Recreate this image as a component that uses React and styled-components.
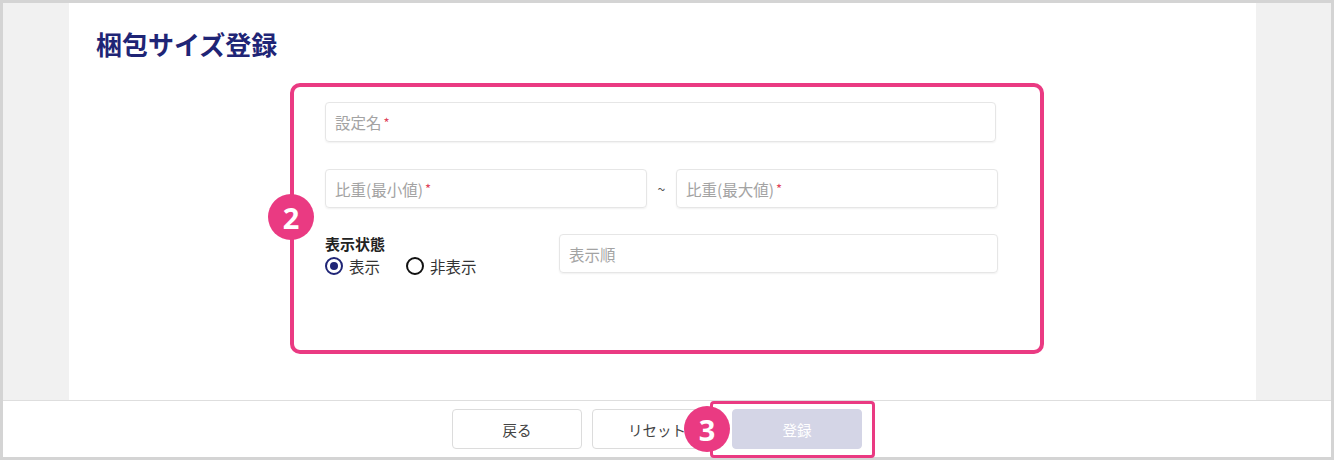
import React from 'react';
import styled, { createGlobalStyle } from 'styled-components';

const GlobalStyle = createGlobalStyle`
  html, body {
    margin: 0;
    padding: 0;
    background: #ffffff;
  }
  body {
    font-family: "Noto Sans CJK JP", "Noto Sans", sans-serif;
  }
`;

const COLORS = {
  navy: '#1f2576',
  pink: '#ea3a82',
  frame: '#d4d4d4',
  side: '#f1f1f1',
  line: '#dedede',
  placeholder: '#a3a3a3',
  required: '#e0445a',
};

const Frame = styled.div`
  position: relative;
  width: 1334px;
  height: 460px;
  box-sizing: border-box;
  border: 3px solid ${COLORS.frame};
  display: flex;
  flex-flow: column nowrap;
  background: white;
`;

const Main = styled.div`
  display: grid;
  grid-template-columns: 66px 1fr 75px;
  height: 397px;
`;

const Side = styled.div`
  background-color: ${COLORS.side};
`;

const Content = styled.div`
  background: white;
  padding: 23px 0 0 27px;
`;

const Title = styled.h1`
  margin: 0;
  font-size: 26px;
  line-height: 36px;
  font-weight: 700;
  color: ${COLORS.navy};
`;

const Form = styled.div`
  margin: 40px 0 0 229px;
  width: 673px;
  display: flex;
  flex-flow: column nowrap;
`;

const Row = styled.div`
  display: flex;
  flex-flow: row nowrap;
  align-items: ${(p) => p.align || 'center'};
  margin-top: ${(p) => p.top || 0}px;
`;

const Field = styled.div`
  box-sizing: border-box;
  width: ${(p) => p.width}px;
  height: ${(p) => p.height || 39}px;
  border: 1px solid #e6e6e6;
  border-radius: 4px;
  box-shadow: 0 1px 2px rgba(0, 0, 0, 0.06);
  padding: 0 9px;
  display: flex;
  align-items: center;
  font-size: 15.5px;
  color: ${COLORS.placeholder};
`;

const Req = styled.span`
  color: ${COLORS.required};
  font-size: 13px;
  margin-left: 2px;
`;

const Tilde = styled.span`
  width: 29px;
  text-align: center;
  color: #555;
  font-size: 14px;
`;

const StatusGroup = styled.div`
  width: 234px;
  display: flex;
  flex-flow: column nowrap;
`;

const Label = styled.div`
  font-size: 15px;
  font-weight: 700;
  color: #222;
  line-height: 19px;
`;

const Radios = styled.div`
  display: flex;
  flex-flow: row nowrap;
  gap: 26px;
  margin-top: 2px;
`;

const RadioItem = styled.label`
  display: flex;
  align-items: center;
  gap: 6px;
  font-size: 15.5px;
  color: #333;
`;

const RadioCircle = styled.span`
  box-sizing: border-box;
  width: 18px;
  height: 18px;
  border-radius: 50%;
  border: 2px solid ${(p) => (p.checked ? COLORS.navy : '#111')};
  display: flex;
  align-items: center;
  justify-content: center;
  &::after {
    content: '';
    width: 8px;
    height: 8px;
    border-radius: 50%;
    background: ${(p) => (p.checked ? COLORS.navy : 'transparent')};
  }
`;

const Footer = styled.div`
  flex: 1;
  border-top: 1px solid ${COLORS.line};
  display: flex;
  flex-flow: row nowrap;
  align-items: center;
  gap: 10px;
  padding-left: 449px;
`;

const Button = styled.div`
  box-sizing: border-box;
  width: 130px;
  height: 40px;
  border-radius: 4px;
  border: 1px solid ${(p) => (p.primary ? '#d4d5e6' : '#dcdcdc')};
  background: ${(p) => (p.primary ? '#d4d5e6' : 'white')};
  color: ${(p) => (p.primary ? 'white' : '#444')};
  font-size: 14.5px;
  display: flex;
  align-items: center;
  justify-content: center;
`;

const Highlight = styled.div`
  position: absolute;
  left: ${(p) => p.x}px;
  top: ${(p) => p.y}px;
  width: ${(p) => p.w}px;
  height: ${(p) => p.h}px;
  box-sizing: border-box;
  border: ${(p) => p.b}px solid ${COLORS.pink};
  border-radius: ${(p) => p.r}px;
  pointer-events: none;
`;

const Badge = styled.div`
  position: absolute;
  left: ${(p) => p.x - 23}px;
  top: ${(p) => p.y - 23}px;
  width: 46px;
  height: 46px;
  border-radius: 50%;
  background: ${COLORS.pink};
  color: white;
  font-family: "Noto Sans", "DejaVu Sans", sans-serif;
  font-weight: 700;
  font-size: 29px;
  display: flex;
  align-items: center;
  justify-content: center;
  line-height: 1;
`;

const App = () => {
  return (
    <>
      <GlobalStyle />
      <Frame>
        <Main>
          <Side />
          <Content>
            <Title>梱包サイズ登録</Title>
            <Form>
              <Row>
                <Field width={671} height={40}>
                  設定名<Req>*</Req>
                </Field>
              </Row>
              <Row top={27}>
                <Field width={322}>
                  比重(最小値)<Req>*</Req>
                </Field>
                <Tilde>~</Tilde>
                <Field width={322}>
                  比重(最大値)<Req>*</Req>
                </Field>
              </Row>
              <Row top={26} align="flex-start">
                <StatusGroup>
                  <Label>表示状態</Label>
                  <Radios>
                    <RadioItem>
                      <RadioCircle checked />
                      表示
                    </RadioItem>
                    <RadioItem>
                      <RadioCircle />
                      非表示
                    </RadioItem>
                  </Radios>
                </StatusGroup>
                <Field width={439}>表示順</Field>
              </Row>
            </Form>
          </Content>
          <Side />
        </Main>
        <Footer>
          <Button>戻る</Button>
          <Button>リセット</Button>
          <Button primary>登録</Button>
        </Footer>
      </Frame>
      <Highlight x={290} y={83} w={754} h={271} b={4} r={10} />
      <Badge x={291} y={217}>2</Badge>
      <Highlight x={710} y={401} w={165} h={57} b={3} r={4} />
      <Badge x={707} y={429}>3</Badge>
    </>
  );
};

export default App;
